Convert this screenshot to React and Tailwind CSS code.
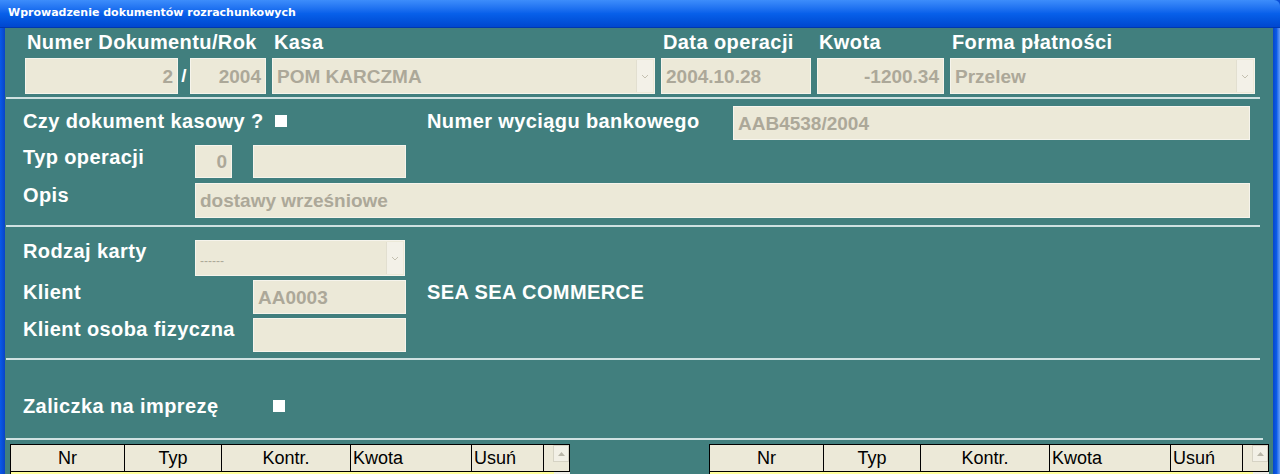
import React from "react";

const font = { fontFamily: '"Liberation Sans", Arial, sans-serif' };

function Field({ w, h = 36, align = "left", value = "", select = false }) {
  return (
    <div
      className={`relative flex items-center bg-[#ece9d8] border border-[#f6f4ec] shrink-0 ${
        align === "right" ? "justify-end pr-[4px]" : "pl-[4px]"
      }`}
      style={{ width: w, height: h }}
    >
      <span className="text-[19px] font-bold text-[#aca899] leading-none whitespace-nowrap">{value}</span>
      {select && (
        <div className="absolute right-[1px] top-[1px] bottom-[1px] w-[17px] bg-[#f3f1e8] border-l border-[#e2dfd0] flex items-center justify-center">
          <svg width="8" height="5" viewBox="0 0 8 5">
            <path d="M1 1 L4 4 L7 1" stroke="#c4c0b0" strokeWidth="1" fill="none" />
          </svg>
        </div>
      )}
    </div>
  );
}

function Label({ children, className = "" }) {
  return (
    <div className={`text-[20px] font-bold text-white tracking-[0.4px] whitespace-nowrap shrink-0 ${className}`}>
      {children}
    </div>
  );
}

function Sep({ className = "" }) {
  return <div className={`h-[2px] bg-[#cfe1e1] ml-[1px] w-[1254px] ${className}`} />;
}

function Check() {
  return <div className="w-[12px] h-[12px] bg-white shrink-0" />;
}

function Table() {
  const cols = [
    { t: "Nr", w: 114, c: true },
    { t: "Typ", w: 97, c: true },
    { t: "Kontr.", w: 129, c: true },
    { t: "Kwota", w: 121, c: false },
    { t: "Usuń", w: 72, c: false },
  ];
  return (
    <div className="w-[560px] shrink-0 border-l border-t border-black">
      <div className="flex h-[26px]">
        {cols.map((c) => (
          <div
            key={c.t}
            className={`h-full bg-[#ece9d8] border-r border-black flex items-center text-[18px] text-black ${
              c.c ? "justify-center" : "pl-[2px]"
            }`}
            style={{ width: c.w }}
          >
            {c.t}
          </div>
        ))}
        <div className="w-[26px] h-full bg-[#ece9d8] border-r border-black flex justify-end items-start">
          <div className="w-[16px] h-[17px] bg-[#f2f0e6] border border-[#d6d3c4] flex items-center justify-center">
            <svg width="7" height="4" viewBox="0 0 7 4">
              <path d="M0 4 L3.5 0 L7 4 Z" fill="#b9b6a8" />
            </svg>
          </div>
        </div>
      </div>
      <div className="flex h-[3px] border-t border-black">
        <div className="w-[543px] bg-[#ffff99]" />
        <div className="flex-1 bg-[#f0efe8]" />
      </div>
    </div>
  );
}

export default function App() {
  return (
    <div className="w-[1280px] h-[474px] overflow-hidden flex flex-col bg-[#0a4fd6]" style={font}>
      <div className="h-[28px] shrink-0 flex items-center pl-[8px] bg-gradient-to-b from-[#3d8dfb] via-[#0860ea] to-[#0047cf] border-b border-[#0038b0] rounded-tr-[6px]">
        <span className="text-white font-bold text-[11px]" style={{ fontFamily: '"DejaVu Sans", Verdana, sans-serif' }}>
          Wprowadzenie dokumentów rozrachunkowych
        </span>
      </div>
      <div className="flex-1 flex">
        <div className="w-[5px] bg-gradient-to-r from-[#0a5ae8] to-[#0844c8]" />
        <div className="w-[1268px] bg-[#417f7e] flex flex-col">
          {/* top row */}
          <div className="flex gap-[6px] pl-[20px] pt-[3px]">
            <div className="w-[241px] flex flex-col gap-[5px]">
              <Label className="h-[22px] leading-[22px] pl-[2px]">Numer Dokumentu/Rok</Label>
              <div className="flex items-center">
                <Field w={153} align="right" value="2" />
                <div className="w-[12px] text-center text-white font-bold text-[19px]">/</div>
                <Field w={76} align="right" value="2004" />
              </div>
            </div>
            <div className="w-[383px] flex flex-col gap-[5px]">
              <Label className="h-[22px] leading-[22px] pl-[2px]">Kasa</Label>
              <Field w={383} value="POM KARCZMA" select />
            </div>
            <div className="w-[150px] flex flex-col gap-[5px]">
              <Label className="h-[22px] leading-[22px] pl-[2px]">Data operacji</Label>
              <Field w={150} value="2004.10.28" />
            </div>
            <div className="w-[127px] flex flex-col gap-[5px]">
              <Label className="h-[22px] leading-[22px] pl-[2px]">Kwota</Label>
              <Field w={127} align="right" value="-1200.34" />
            </div>
            <div className="w-[305px] flex flex-col gap-[5px]">
              <Label className="h-[22px] leading-[22px] pl-[2px]">Forma płatności</Label>
              <Field w={305} value="Przelew" select />
            </div>
          </div>
          <Sep className="mt-[3px]" />

          {/* bank section */}
          <div className="flex flex-col gap-[5px] pl-[18px] mt-[7px]">
            <div className="flex items-start h-[34px]">
              <div className="w-[404px] flex items-center gap-[11px] h-[30px]">
                <Label className="leading-[30px]">Czy dokument kasowy ?</Label>
                <Check />
              </div>
              <Label className="w-[306px] leading-[30px]">Numer wyciągu bankowego</Label>
              <Field w={517} h={34} value="AAB4538/2004" />
            </div>
            <div className="flex items-start">
              <Label className="w-[172px] leading-[24px]">Typ operacji</Label>
              <Field w={37} h={33} align="right" value="0" />
              <div className="w-[21px]" />
              <Field w={153} h={33} />
            </div>
            <div className="flex items-start">
              <Label className="w-[172px] leading-[24px]">Opis</Label>
              <Field w={1055} h={35} value="dostawy wrześniowe" />
            </div>
          </div>
          <Sep className="mt-[7px]" />

          {/* client section */}
          <div className="flex flex-col gap-[4px] pl-[18px] mt-[13px]">
            <div className="flex items-start">
              <Label className="w-[172px] leading-[22px]">Rodzaj karty</Label>
              <Field w={210} value={<span className="text-[12px] font-normal">------</span>} select />
            </div>
            <div className="flex items-start">
              <Label className="w-[230px] leading-[24px]">Klient</Label>
              <Field w={153} h={34} value="AA0003" />
              <Label className="ml-[21px] leading-[24px]">SEA SEA COMMERCE</Label>
            </div>
            <div className="flex items-start">
              <Label className="w-[230px] leading-[22px]">Klient osoba fizyczna</Label>
              <Field w={153} h={34} />
            </div>
          </div>
          <Sep className="mt-[6px]" />

          {/* advance */}
          <div className="flex items-center h-[24px] pl-[18px] mt-[34px]">
            <Label className="w-[250px]">Zaliczka na imprezę</Label>
            <Check />
          </div>
          <Sep className="mt-[20px] w-[1257px]" />

          {/* tables */}
          <div className="flex mt-[4px] pl-[5px] gap-[139px]">
            <Table />
            <Table />
          </div>
        </div>
        <div className="w-[7px] bg-gradient-to-r from-[#0847c9] via-[#0a5ae8] to-[#6aa0f4]" />
      </div>
    </div>
  );
}
